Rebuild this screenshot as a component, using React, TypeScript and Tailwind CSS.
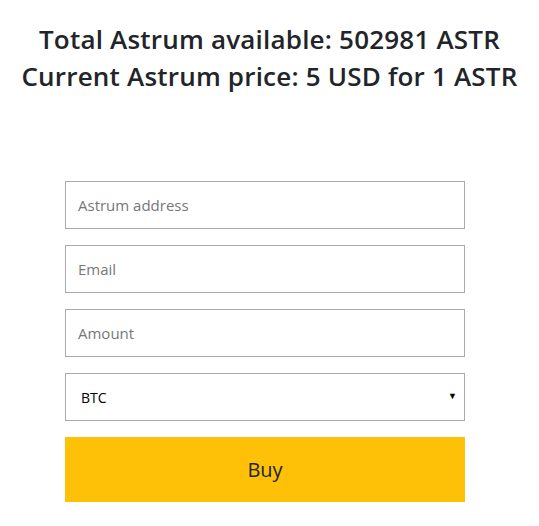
import React from "react";

export default function App() {
  return (
    <div className="w-[539px] h-[526px] bg-white text-[#212529]" style={{ fontFamily: '"Open Sans", "Noto Sans", sans-serif' }}>
      <div className="pt-[21px] text-center text-[26px] font-semibold leading-[37px] tracking-[0.2px]">
        <div>Total Astrum available: 502981 ASTR</div>
        <div>Current Astrum price: 5 USD for 1 ASTR</div>
      </div>
      <div className="mt-[86px] mx-[65px] w-[400px] flex flex-col gap-[16px]">
        <input
          className="h-[48px] w-full border border-[#aaaaaa] px-[12px] text-[15px] text-[#495057] placeholder:text-[#777777] outline-none"
          placeholder="Astrum address"
        />
        <input
          className="h-[48px] w-full border border-[#aaaaaa] px-[12px] text-[15px] text-[#495057] placeholder:text-[#777777] outline-none"
          placeholder="Email"
        />
        <input
          className="h-[48px] w-full border border-[#aaaaaa] px-[12px] text-[15px] text-[#495057] placeholder:text-[#777777] outline-none"
          placeholder="Amount"
        />
        <div className="relative h-[48px] w-full border border-[#aaaaaa] flex items-center px-[15px] text-[14px] text-black">
          <span>BTC</span>
          <span className="absolute right-[7px] top-[17px] text-[9px] leading-none">▼</span>
        </div>
        <button className="h-[65px] w-full bg-[#ffc107] text-[20px] text-[#212529]">Buy</button>
      </div>
    </div>
  );
}
